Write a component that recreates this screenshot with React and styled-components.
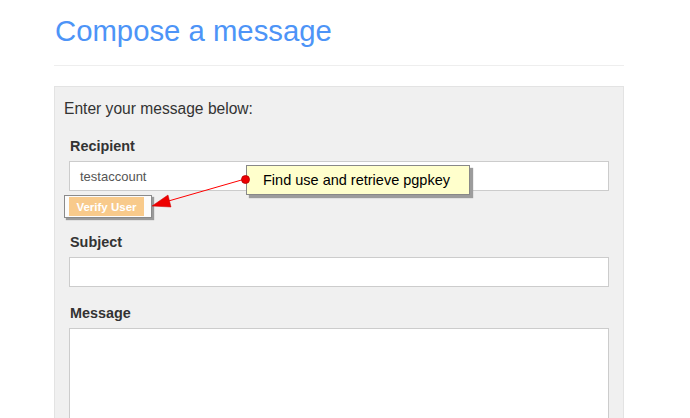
import React from "react";
import styled, { createGlobalStyle } from "styled-components";

const Global = createGlobalStyle`
  html, body { margin: 0; padding: 0; background: #fff; }
  body { font-family: "Liberation Sans", Arial, sans-serif; color: #333; }
`;

const Page = styled.div`
  width: 570px;
  margin-left: 54px;
  padding-top: 14px;
`;

const Title = styled.h1`
  margin: 0 0 0 1px;
  font-size: 29.3px;
  line-height: 34px;
  font-weight: normal;
  color: #4d94f7;
`;

const Rule = styled.hr`
  margin: 17px 0 0;
  border: 0;
  border-top: 1px solid #eeeeee;
`;

const Panel = styled.div`
  margin-top: 20px;
  background: #f0f0f0;
  border: 1px solid #e3e3e3;
  padding: 12px 14px 40px 14px;
`;

const Intro = styled.p`
  margin: 0 0 16px -5px;
  font-size: 15.6px;
  line-height: 20px;
  color: #333;
`;

const Field = styled.div`
  position: relative;
  display: flex;
  flex-direction: column;
  margin-bottom: ${(p) => p.$gap ?? 14}px;
`;

const Label = styled.label`
  font-size: 14.4px;
  line-height: 20px;
  font-weight: bold;
  color: #333;
  margin: 0 0 5px 1px;
  padding-top: 1px;
`;

const TextInput = styled.div`
  box-sizing: border-box;
  height: ${(p) => p.$h ?? 30}px;
  background: #fff;
  border: 1px solid #cccccc;
  padding: 0 10px;
  display: flex;
  align-items: center;
  font-size: 13px;
  color: #555;
`;

const VerifyRow = styled.div`
  display: flex;
  margin: 4px 0 0 -5px;
`;

const Highlight = styled.div`
  display: flex;
  padding: 1px 7px 1px 4px;
  background: #fcfcfc;
  border: 1px solid #8a8a8a;
  box-shadow: 2px 2px 1px #9a9a9a;
`;

const VerifyButton = styled.span`
  display: flex;
  align-items: center;
  justify-content: center;
  width: 75px;
  height: 19px;
  background: #f8ca8b;
  color: #fff;
  font-size: 11.5px;
  font-weight: bold;
`;

const Callout = styled.div`
  position: absolute;
  left: 177px;
  top: 30px;
  box-sizing: border-box;
  width: 224px;
  height: 30px;
  background: #ffffcc;
  border: 1px solid #888;
  box-shadow: 3px 3px 1px #9c9c9c;
  padding-left: 16px;
  display: flex;
  align-items: center;
  font-size: 14.5px;
  color: #000;
`;

const Overlay = styled.svg`
  position: absolute;
  left: 0;
  top: 0;
  overflow: visible;
  pointer-events: none;
`;

function Arrow() {
  return (
    <Overlay width="200" height="90">
      <line x1="176" y1="44" x2="96" y2="67" stroke="#ff0000" strokeWidth="1" />
      <polygon points="83,71 99,60 102,72" fill="#ee0000" stroke="#cc0000" strokeWidth="0.5" />
      <circle cx="176.5" cy="44.5" r="4" fill="#ee0000" stroke="#b00000" strokeWidth="0.8" />
    </Overlay>
  );
}

export default function App() {
  return (
    <>
      <Global />
      <Page>
        <Title>Compose a message</Title>
        <Rule />
        <Panel>
          <Intro>Enter your message below:</Intro>
          <Field $gap={13}>
            <Label>Recipient</Label>
            <TextInput>testaccount</TextInput>
            <VerifyRow>
              <Highlight>
                <VerifyButton>Verify User</VerifyButton>
              </Highlight>
            </VerifyRow>
            <Callout>Find use and retrieve pgpkey</Callout>
            <Arrow />
          </Field>
          <Field $gap={15}>
            <Label>Subject</Label>
            <TextInput />
          </Field>
          <Field>
            <Label>Message</Label>
            <TextInput $h={160} />
          </Field>
        </Panel>
      </Page>
    </>
  );
}
